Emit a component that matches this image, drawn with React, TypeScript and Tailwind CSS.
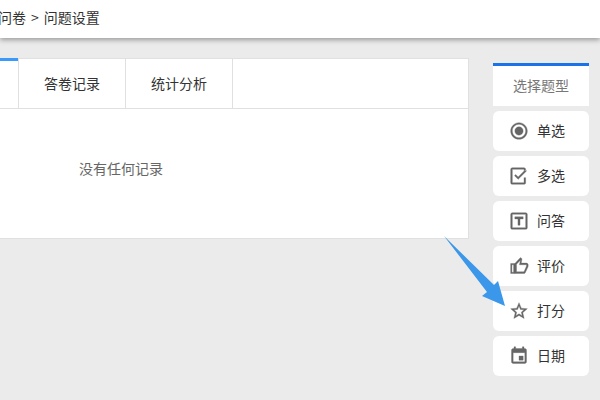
const font = "font-['Microsoft_YaHei','Noto_Sans_CJK_SC',sans-serif]";

const items = [
  {
    label: "单选",
    d: "M12 7c-2.76 0-5 2.24-5 5s2.24 5 5 5 5-2.24 5-5-2.24-5-5-5zm0-5C6.48 2 2 6.48 2 12s4.48 10 10 10 10-4.48 10-10S17.52 2 12 2zm0 18c-4.42 0-8-3.58-8-8s3.58-8 8-8 8 3.58 8 8-3.58 8-8 8z",
  },
  {
    label: "多选",
    d: "M4 2h14c1.100 0 2 .9 2 2v2h-2V4H4v16h14v-6h2v6c0 1.100-.9 2-2 2H4c-1.100 0-2-.9-2-2V4c0-1.100.9-2 2-2zm2.600 9.600L8 10.200l3 3 8.600-8.600L21 6l-10 10-4.400-4.400z",
  },
  {
    label: "问答",
    d: "M4 2h16c1.100 0 2 .9 2 2v16c0 1.100-.9 2-2 2H4c-1.100 0-2-.9-2-2V4c0-1.100.9-2 2-2zm0 2v16h16V4H4zm3 3h10v2.500h-3.750V17h-2.500V9.500H7z",
  },
  {
    label: "评价",
    d: "M2 9h5v12H2zM3.500 10.500v9h2v-9zM7 9l6.500-7c1 0 2 .8 2 2l-.8 4.500H21c1 0 2 1 2 2v2l-3.200 7c-.3.9-1 1.500-1.800 1.500H7zM9 9.800V19h9l3-7v-1.500h-8.500l1.200-5.500z",
  },
  {
    label: "打分",
    d: "M22 9.240l-7.190-.62L12 2 9.190 8.630 2 9.240l5.460 4.730L5.820 21 12 17.270 18.180 21l-1.630-7.030L22 9.240zM12 15.400l-3.760 2.270 1-4.280-3.320-2.880 4.380-.38L12 6.100l1.710 4.040 4.380.38-3.320 2.880 1 4.280L12 15.400z",
  },
  {
    label: "日期",
    d: "M17 12h-5v5h5v-5zM16 1v2H8V1H6v2H5c-1.110 0-1.990.9-1.990 2L3 19c0 1.100.89 2 2 2h14c1.100 0 2-.9 2-2V5c0-1.100-.9-2-2-2h-1V1h-2zm3 18H5V8h14v11z",
  },
];

export default function App() {
  return (
    <div className={`flex h-[400px] w-[600px] flex-col overflow-hidden bg-[#ebebeb] ${font}`}>
      <header className="flex h-[38px] shrink-0 items-center bg-white pb-[5px] text-sm text-[#333] shadow-[0_2px_5px_rgba(0,0,0,0.35)]">
        <span className="-ml-[2px] flex">
          问卷
          <span className="mx-[5px]">&gt;</span>
          问题设置
        </span>
      </header>

      <div className="relative flex flex-1 items-start">
        <section className="mt-5 h-[181px] w-[469px] border-r border-b border-[#e0e0e0] bg-white">
          <div className="flex h-[51px] border-b border-[#e0e0e0] text-sm text-[#333]">
            <div className="h-full w-[18px] border-t-[3px] border-[#3b99fc]" />
            {["答卷记录", "统计分析"].map((tab) => (
              <div
                key={tab}
                className="flex w-[107px] items-center justify-center border-t border-l border-[#e0e0e0] pb-px"
              >
                {tab}
              </div>
            ))}
            <div className="flex-1 border-t border-l border-[#e0e0e0]" />
          </div>
          <p className="pt-[49px] pl-[79px] text-sm text-[#666]">没有任何记录</p>
        </section>

        <aside className="mt-[25px] ml-6 flex w-24 flex-col gap-[5px]">
          <div className="flex h-[43px] items-center justify-center border-t-[3px] border-[#1a73e8] bg-white pb-[2px] text-sm text-[#777]">
            选择题型
          </div>
          {items.map((item) => (
            <div key={item.label} className="flex h-10 items-center rounded-md bg-white pl-4 text-sm text-[#333]">
              <svg viewBox="0 0 24 24" className="h-5 w-5 fill-[#666] stroke-[#666] stroke-[0.4]">
                <path fillRule="evenodd" d={item.d} />
              </svg>
              <span className="ml-[8px] pb-[3px]">{item.label}</span>
            </div>
          ))}
        </aside>

        {/* callout arrow drawn over the page */}
        <svg className="absolute top-0 left-0 h-[362px] w-[600px]" viewBox="0 38 600 362">
          <polygon points="444,236 494,285 498,281 505,306 482,296 487,292" fill="#3a97e9" />
        </svg>
      </div>
    </div>
  );
}
